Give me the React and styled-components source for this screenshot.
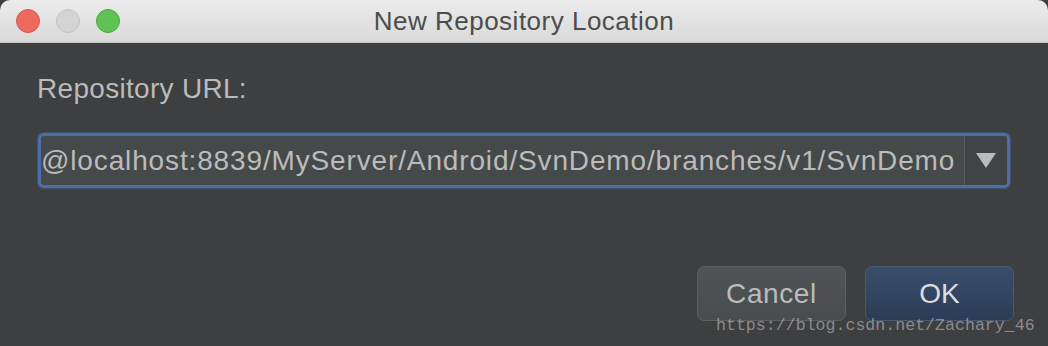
import React from "react";
import styled, { createGlobalStyle } from "styled-components";

const Global = createGlobalStyle`
  html, body { margin: 0; padding: 0; background: #3b3d3f; }
  #root { width: 1048px; height: 346px; }
`;

const Window = styled.div`
  position: relative;
  width: 1048px;
  height: 346px;
  display: flex;
  flex-direction: column;
  background: #3d3f41;
  font-family: "Liberation Sans", Arial, sans-serif;
  overflow: hidden;
`;

const TitleBar = styled.div`
  height: 43px;
  box-sizing: border-box;
  display: grid;
  grid-template-columns: 1fr auto 1fr;
  align-items: center;
  background: linear-gradient(#ececec, #d9d9d9);
  border-radius: 10px 10px 0 0;
  border-bottom: 1px solid #c2c2c2;
`;

const Lights = styled.div`
  display: flex;
  gap: 16px;
  padding-left: 16px;
`;

const Light = styled.span`
  width: 24px;
  height: 24px;
  box-sizing: border-box;
  border-radius: 50%;
  background: ${(p) => p.$bg};
  border: 1px solid ${(p) => p.$edge};
`;

const Title = styled.div`
  font-size: 26px;
  letter-spacing: 0.5px;
  color: #4c4c4c;
`;

const Body = styled.div`
  flex: 1;
  display: flex;
  flex-direction: column;
  padding: 0 38px 0 38px;
`;

const Label = styled.div`
  margin-top: 31px;
  font-size: 28px;
  line-height: 30px;
  letter-spacing: 0.3px;
  color: #bbbbbb;
  margin-left: -1px;
`;

const Combo = styled.div`
  margin-top: 29px;
  width: 972px;
  height: 55px;
  box-sizing: border-box;
  display: flex;
  border: 3px solid #4b6fa6;
  border-radius: 6px;
  background: #45494a;
  box-shadow: 0 0 2px 1px rgba(75, 111, 166, 0.5);
  overflow: hidden;
`;

const Field = styled.div`
  flex: 1;
  white-space: nowrap;
  display: flex;
  align-items: center;
  padding-left: 0;
  font-size: 28px;
  letter-spacing: 0.86px;
  color: #bbbbbb;
`;

const ArrowButton = styled.div`
  width: 42px;
  display: flex;
  align-items: center;
  justify-content: center;
  border-left: 1px solid #5a5d60;
  background: #414446;
`;

const Footer = styled.div`
  margin-top: auto;
  display: flex;
  justify-content: flex-end;
  gap: 19px;
  padding: 0 34px 25px 0;
`;

const Button = styled.button`
  width: 149px;
  height: 55px;
  box-sizing: border-box;
  border-radius: 7px;
  font-family: "Liberation Sans", Arial, sans-serif;
  font-size: 28px;
  letter-spacing: ${(p) => (p.$primary ? "0" : "0.6px")};
  border: 1px solid ${(p) => (p.$primary ? "#4b596d" : "#5d6062")};
  background: ${(p) =>
    p.$primary
      ? "linear-gradient(#3a4e6c, #2b3c55)"
      : "linear-gradient(#505456, #484c4e)"};
  color: ${(p) => (p.$primary ? "#dddddd" : "#bbbbbb")};
  padding: 0;
`;

const Watermark = styled.div`
  position: absolute;
  left: 716px;
  top: 316px;
  font-family: "Liberation Mono", "DejaVu Sans Mono", monospace;
  font-size: 16.6px;
  color: rgba(205, 205, 205, 0.55);
  white-space: nowrap;
`;

export default function App() {
  return (
    <>
      <Global />
      <Window>
        <TitleBar>
          <Lights>
            <Light $bg="#ee6a5e" $edge="#d5574c" />
            <Light $bg="#d4d4d4" $edge="#c2c2c2" />
            <Light $bg="#5fc454" $edge="#4aa83f" />
          </Lights>
          <Title>New Repository Location</Title>
          <span />
        </TitleBar>
        <Body>
          <Label>Repository URL:</Label>
          <Combo>
            <Field>@localhost:8839/MyServer/Android/SvnDemo/branches/v1/SvnDemo</Field>
            <ArrowButton>
              <svg width="20" height="15" viewBox="0 0 20 15">
                <polygon points="0,0 20,0 10,15" fill="#bbbbbb" />
              </svg>
            </ArrowButton>
          </Combo>
        </Body>
        <Footer>
          <Button>Cancel</Button>
          <Button $primary>OK</Button>
        </Footer>
        <Watermark>https://blog.csdn.net/Zachary_46</Watermark>
      </Window>
    </>
  );
}
